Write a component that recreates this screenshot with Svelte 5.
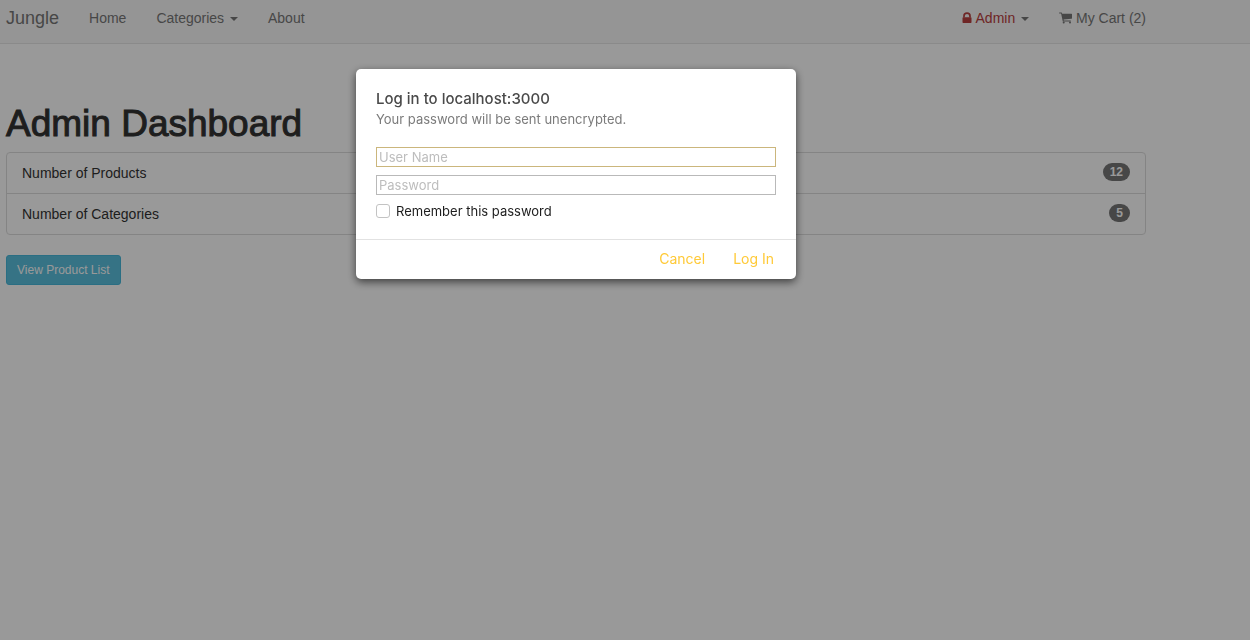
<script>
  const stats = [
    { label: 'Number of Products', count: 12 },
    { label: 'Number of Categories', count: 5 }
  ];
  let username = $state('');
  let password = $state('');
  let remember = $state(false);
</script>

<div class="page">
  <header class="navbar">
    <nav class="container bar">
      <a class="brand" href="#top">Jungle</a>
      <a href="#home">Home</a>
      <a href="#categories">Categories <span class="caret"></span></a>
      <a href="#about">About</a>
      <a class="right admin" href="#admin">
        <svg width="10" height="12" viewBox="0 0 10 12" aria-hidden="true">
          <path d="M2 5.5V4a3 2.9 0 0 1 6 0V5.5" fill="none" stroke="currentColor" stroke-width="1.7" />
          <rect x="0.5" y="5.3" width="9" height="5.7" rx="0.7" fill="currentColor" />
        </svg>
        <span>Admin</span>
        <span class="caret"></span>
      </a>
      <a class="cart" href="#cart">
        <svg width="13" height="12" viewBox="0 0 13 12" aria-hidden="true">
          <path d="M.4 .5h2q.5 0 .6.5l.2.8h9.3q.5 0 .5.5v3.9q0 .4-.5.5L4.6 7.6l.1.9h6.8q.4 0 .4.4t-.4.5H4.2q-.5 0-.5-.5L2.1 1.4H.4q-.4 0-.4-.4t.4-.5z" fill="currentColor" />
          <circle cx="4.7" cy="10.6" r="1" fill="currentColor" />
          <circle cx="11" cy="10.6" r="1" fill="currentColor" />
        </svg>
        <span>My Cart (2)</span>
      </a>
    </nav>
  </header>

  <main class="container">
    <h1>Admin Dashboard</h1>
    <ul>
      {#each stats as item}
        <li><span>{item.label}</span><span class="badge">{item.count}</span></li>
      {/each}
    </ul>
    <a class="btn" href="#products">View Product List</a>
  </main>
</div>

<div class="backdrop">
  <div class="container">
    <form class="dialog" role="dialog" aria-labelledby="title" onsubmit={(e) => e.preventDefault()}>
      <div class="body">
        <h2 id="title">Log in to localhost:3000</h2>
        <p>Your password will be sent unencrypted.</p>
        <input class="field active" type="text" aria-label="User Name" placeholder="User Name" bind:value={username} />
        <input class="field" type="password" aria-label="Password" placeholder="Password" bind:value={password} />
        <label><input type="checkbox" bind:checked={remember} />Remember this password</label>
      </div>
      <footer>
        <button type="button">Cancel</button>
        <button class="submit" type="submit">Log In</button>
      </footer>
    </form>
  </div>
</div>

<style>
  :global(body) {
    background: #fff;
    font-family: "Liberation Sans", Arial, sans-serif;
    font-size: 14px;
    line-height: 20px;
    color: #333;
  }
  .container {
    box-sizing: border-box;
    max-width: 1146px;
    padding-left: 6px;
  }
  .navbar {
    background: #f8f8f8;
    border-bottom: 1px solid #e7e7e7;
  }
  .bar {
    display: flex;
    gap: 30px;
    padding-top: 8px;
    padding-bottom: 15px;
  }
  .bar a {
    color: #777;
    text-decoration: none;
    white-space: nowrap;
  }
  .bar .brand {
    font-size: 18px;
  }
  .caret {
    display: inline-block;
    margin-left: 2px;
    vertical-align: middle;
    border-top: 4px solid #777;
    border-left: 4px solid transparent;
    border-right: 4px solid transparent;
  }
  .bar .right {
    margin-left: auto;
  }
  .admin span:first-of-type,
  .admin svg {
    color: #b94040;
  }
  .admin svg {
    vertical-align: -1px;
  }
  .cart svg {
    vertical-align: -1px;
  }
  h1 {
    margin: 60px 0 8px;
    font-size: 37px;
    line-height: 40px;
    font-weight: 400;
    -webkit-text-stroke: 1px #333;
  }
  ul {
    list-style: none;
    margin: 0 0 20px;
    padding: 0;
    border: 1px solid #ddd;
    border-radius: 4px;
  }
  li {
    display: flex;
    justify-content: space-between;
    align-items: flex-start;
    padding: 10px 15px;
  }
  li + li {
    border-top: 1px solid #ddd;
  }
  .badge {
    padding: 3px 7px;
    border-radius: 10px;
    background: #777;
    color: #fff;
    font-size: 12px;
    line-height: 12px;
    font-weight: 700;
  }
  .btn {
    display: inline-block;
    padding: 5px 10px;
    border: 1px solid #46b8da;
    border-radius: 3px;
    background: #5bc0de;
    color: #fff;
    font-size: 12px;
    line-height: 18px;
    text-decoration: none;
  }
  .backdrop {
    position: fixed;
    inset: 0;
    padding-top: 69px;
    background: rgba(0, 0, 0, 0.4);
    font-family: Inter, sans-serif;
  }
  .dialog {
    max-width: 440px;
    margin: 0 auto;
    background: #fff;
    border-radius: 5px;
    box-shadow: 0 3px 8px rgba(0, 0, 0, 0.6);
  }
  .body {
    display: flex;
    flex-direction: column;
    padding: 20px 20px 18px;
  }
  h2 {
    margin: 0;
    font-size: 15px;
    line-height: 20px;
    font-weight: 500;
    color: #4a4a4a;
  }
  p {
    margin: 0 0 18px;
    font-size: 13px;
    line-height: 20px;
    color: #7b7b7b;
  }
  .field {
    box-sizing: border-box;
    width: 100%;
    height: 20px;
    margin: 0 0 8px;
    padding: 0 2px;
    border: 1px solid #b9b9b9;
    outline: none;
    background: #fff;
    font: 13px/18px Inter, sans-serif;
  }
  .active {
    border-color: #cbb67c;
  }
  .field::placeholder {
    color: #bdbdbd;
  }
  label {
    display: flex;
    align-items: center;
    gap: 6px;
    padding-bottom: 2px;
    font-size: 13px;
    line-height: 16px;
    color: #1d1d1d;
  }
  label input {
    appearance: none;
    box-sizing: border-box;
    width: 14px;
    height: 14px;
    margin: 0;
    border: 1px solid #c3c3c3;
    border-radius: 3px;
    background: #fff;
  }
  label input:checked {
    background: #ffc933;
  }
  footer {
    display: flex;
    justify-content: flex-end;
    gap: 28px;
    padding: 9px 22px 10px;
    border-top: 1px solid #e2e2e2;
  }
  button {
    padding: 0;
    border: 0;
    background: none;
    color: #ffca38;
    font: 14px/20px Inter, sans-serif;
  }
</style>
